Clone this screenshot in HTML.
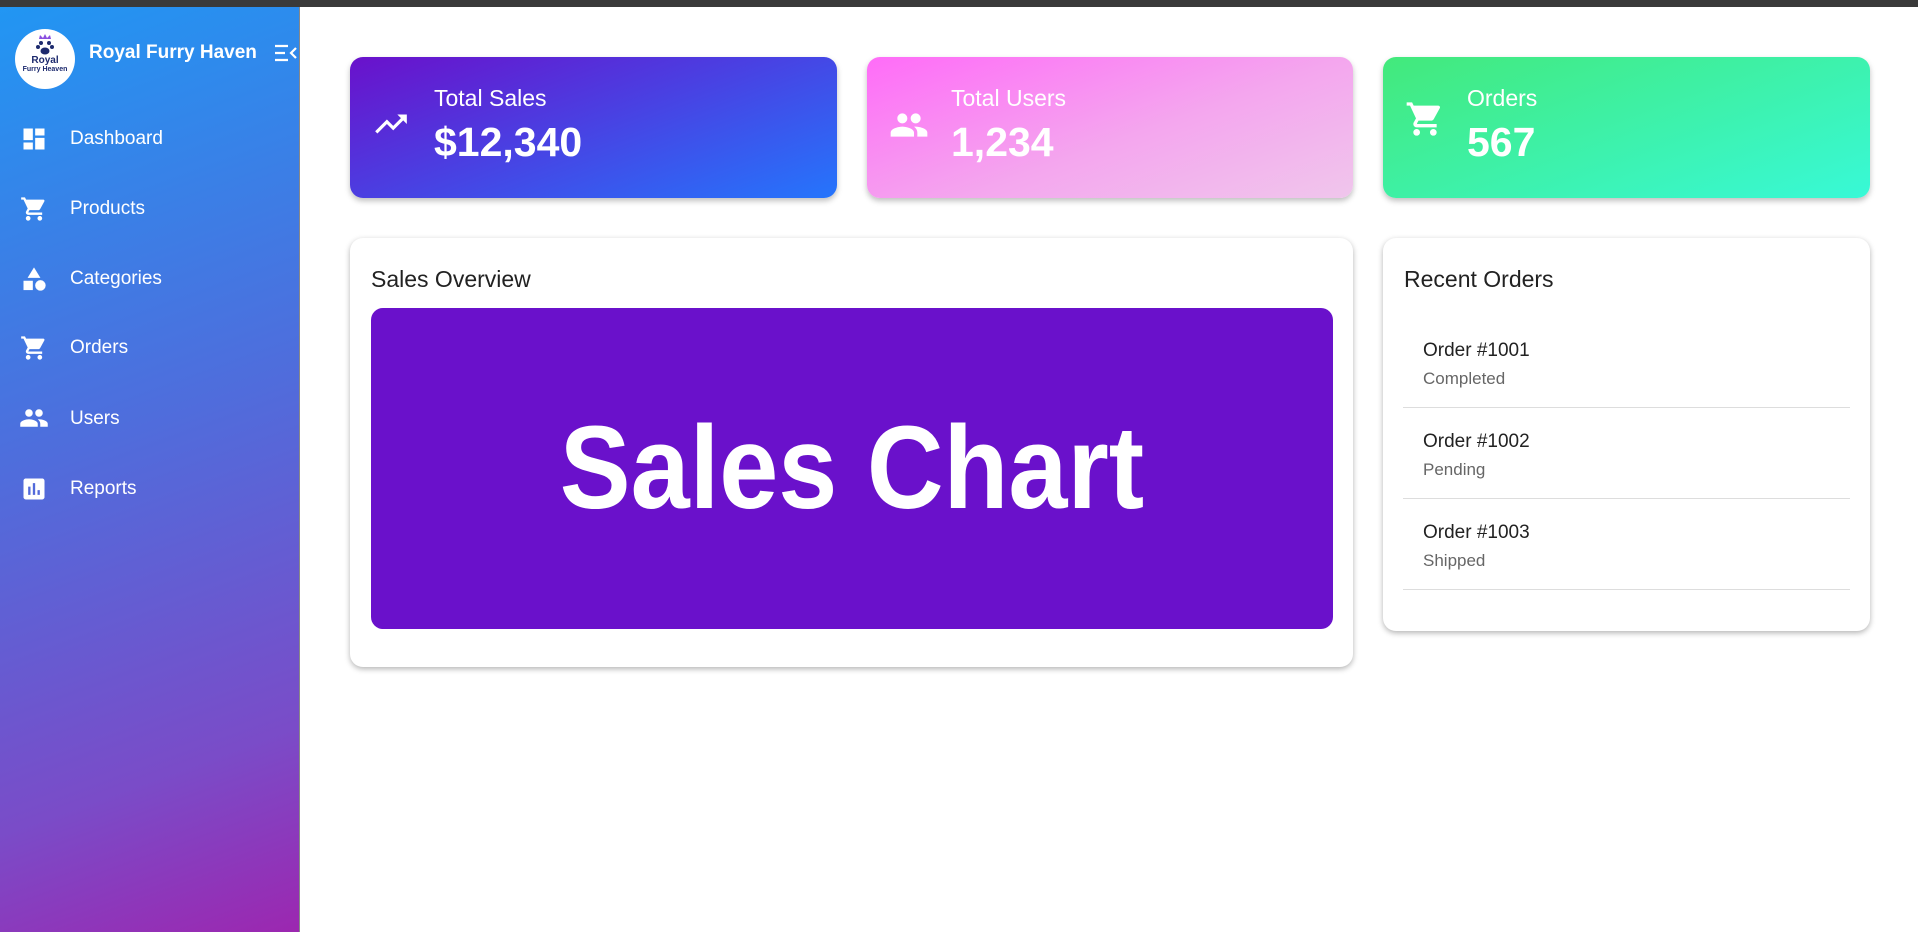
<!DOCTYPE html>
<html><head><meta charset="utf-8"><style>
*{box-sizing:border-box;margin:0;padding:0}
body{width:1918px;height:932px;overflow:hidden;background:#fff;font-family:"Liberation Sans",sans-serif;position:relative}
.topbar{position:absolute;left:0;top:0;width:1918px;height:7px;background:#3a3a3a}
.side{position:absolute;left:0;top:7px;width:300px;height:925px;background:linear-gradient(160deg,#2196f3 0%,#4f6ddc 45%,#7a4cc8 80%,#9c27b0 100%);border-right:1px solid #888}
.logo{position:absolute;left:15px;top:22px;width:60px;height:60px;border-radius:50%;background:#fff;text-align:center;color:#1d2a6e;font-weight:bold}
.brand{position:absolute;left:89px;top:35px;color:#fff;font-weight:bold;font-size:19px}
.item{position:absolute;left:0;width:300px;height:40px;color:#fff;font-size:19px}
.item svg{position:absolute;left:20px;top:6px}
.item span{position:absolute;left:70px;top:9px}
.card{position:absolute;border-radius:13px;box-shadow:0 3px 6px rgba(0,0,0,.25);color:#fff}
.card .t{position:absolute;left:84px;top:28px;font-size:23px}
.card .v{position:absolute;left:84px;top:62px;font-size:41px;font-weight:bold}
.card svg{position:absolute;left:22px;top:48px}
.panel{position:absolute;background:#fff;border-radius:13px;box-shadow:0 2px 6px rgba(0,0,0,.3);color:#222}
.ptitle{position:absolute;left:21px;top:28px;font-size:23px}
.ord{position:absolute;left:20px;width:447px;height:91px;border-bottom:1px solid #ddd}
.ord .a{position:absolute;left:20px;top:23px;font-size:19px;color:#222}
.ord .b{position:absolute;left:20px;top:52px;font-size:17px;color:#666}
</style></head><body>
<div class="topbar"></div>
<div class="side">
 <div class="logo"><svg width="24" height="22" viewBox="0 0 24 22" style="position:absolute;left:18px;top:5px"><path d="M6 5 L7 1 L10 4 L12 0 L14 4 L17 1 L18 5 Z" fill="#8a4fe0"/><circle cx="8" cy="9" r="2" fill="#1d2a6e"/><circle cx="16" cy="9" r="2" fill="#1d2a6e"/><circle cx="5" cy="13" r="2" fill="#1d2a6e"/><circle cx="19" cy="13" r="2" fill="#1d2a6e"/><ellipse cx="12" cy="17" rx="4.5" ry="3.5" fill="#1d2a6e"/></svg><div style="position:absolute;top:26px;width:60px;font-size:10px">Royal</div><div style="position:absolute;top:37px;width:60px;font-size:7px">Furry Heaven</div></div>
 <div class="brand">Royal Furry Haven</div>
 <svg style="position:absolute;left:274px;top:36px" width="24" height="20" viewBox="0 0 24 20"><path d="M1 3h13M1 10h10M1 17h13M22 5l-5 5 5 5" stroke="#fff" stroke-width="2.2" fill="none"/></svg>
 <div class="item" style="top:112px"><svg width="28" height="28" viewBox="0 0 24 24"><path d="M3 13h8V3H3v10zm0 8h8v-6H3v6zm10 0h8V11h-8v10zm0-18v6h8V3h-8z" fill="#fff"/></svg><span>Dashboard</span></div>
 <div class="item" style="top:182px"><svg width="28" height="28" viewBox="0 0 24 24"><path d="M7 18c-1.1 0-2 .9-2 2s.9 2 2 2 2-.9 2-2-.9-2-2-2zM1 2v2h2l3.6 7.59-1.35 2.45c-.16.28-.25.61-.25.96 0 1.1.9 2 2 2h12v-2H7.42c-.14 0-.25-.11-.25-.25l.03-.12.9-1.63h7.45c.75 0 1.41-.41 1.75-1.03l3.58-6.49A1 1 0 0 0 20 4H5.21l-.94-2H1zm16 16c-1.1 0-2 .9-2 2s.9 2 2 2 2-.9 2-2-.9-2-2-2z" fill="#fff"/></svg><span>Products</span></div>
 <div class="item" style="top:252px"><svg width="28" height="28" viewBox="0 0 24 24"><path d="M12 2l-5.5 9h11z" fill="#fff"/><circle cx="17.5" cy="17.5" r="4.5" fill="#fff"/><path d="M3 13.5h8v8H3z" fill="#fff"/></svg><span>Categories</span></div>
 <div class="item" style="top:321px"><svg width="28" height="28" viewBox="0 0 24 24"><path d="M7 18c-1.1 0-2 .9-2 2s.9 2 2 2 2-.9 2-2-.9-2-2-2zM1 2v2h2l3.6 7.59-1.35 2.45c-.16.28-.25.61-.25.96 0 1.1.9 2 2 2h12v-2H7.42c-.14 0-.25-.11-.25-.25l.03-.12.9-1.63h7.45c.75 0 1.41-.41 1.75-1.03l3.58-6.49A1 1 0 0 0 20 4H5.21l-.94-2H1zm16 16c-1.1 0-2 .9-2 2s.9 2 2 2 2-.9 2-2-.9-2-2-2z" fill="#fff"/></svg><span>Orders</span></div>
 <div class="item" style="top:392px"><svg width="30" height="30" viewBox="0 0 24 24" style="left:19px;top:4px"><path d="M16 11c1.66 0 2.99-1.34 2.99-3S17.66 5 16 5c-1.66 0-3 1.34-3 3s1.34 3 3 3zm-8 0c1.66 0 2.99-1.34 2.99-3S9.66 5 8 5C6.34 5 5 6.34 5 8s1.34 3 3 3zm0 2c-2.33 0-7 1.17-7 3.5V19h14v-2.5c0-2.33-4.67-3.5-7-3.5zm8 0c-.29 0-.62.02-.97.05 1.16.84 1.97 1.97 1.97 3.45V19h6v-2.5c0-2.33-4.67-3.5-7-3.5z" fill="#fff"/></svg><span>Users</span></div>
 <div class="item" style="top:462px"><svg width="28" height="28" viewBox="0 0 24 24"><path d="M19 3H5c-1.1 0-2 .9-2 2v14c0 1.1.9 2 2 2h14c1.1 0 2-.9 2-2V5c0-1.1-.9-2-2-2zM9 17H7v-7h2v7zm4 0h-2V7h2v10zm4 0h-2v-4h2v4z" fill="#fff"/></svg><span>Reports</span></div>
</div>

<div class="card" style="left:350px;top:57px;width:487px;height:141px;background:linear-gradient(160deg,#6a11cb,#2575fc)">
 <svg width="38" height="38" viewBox="0 0 24 24"><path d="M16 6l2.29 2.29-4.88 4.88-4-4L2 16.59 3.41 18l6-6 4 4 6.3-6.29L22 12V6z" fill="#fff"/></svg>
 <div class="t">Total Sales</div><div class="v">$12,340</div></div>
<div class="card" style="left:867px;top:57px;width:486px;height:141px;background:linear-gradient(160deg,#ff6cf8,#f4a6ee 55%,#f0c6ec)">
 <svg width="40" height="40" viewBox="0 0 24 24"><path d="M16 11c1.66 0 2.99-1.34 2.99-3S17.66 5 16 5c-1.66 0-3 1.34-3 3s1.34 3 3 3zm-8 0c1.66 0 2.99-1.34 2.99-3S9.66 5 8 5C6.34 5 5 6.34 5 8s1.34 3 3 3zm0 2c-2.33 0-7 1.17-7 3.5V19h14v-2.5c0-2.33-4.67-3.5-7-3.5zm8 0c-.29 0-.62.02-.97.05 1.16.84 1.970 1.97 1.97 3.45V19h6v-2.5c0-2.33-4.67-3.5-7-3.5z" fill="#fff"/></svg>
 <div class="t">Total Users</div><div class="v">1,234</div></div>
<div class="card" style="left:1383px;top:57px;width:487px;height:141px;background:linear-gradient(160deg,#43e97b,#38f9d7)">
 <svg width="40" height="40" viewBox="0 0 24 24" style="top:42px"><path d="M7 18c-1.1 0-2 .9-2 2s.9 2 2 2 2-.9 2-2-.9-2-2-2zM1 2v2h2l3.6 7.59-1.35 2.45c-.16.28-.25.61-.25.96 0 1.1.9 2 2 2h12v-2H7.42c-.14 0-.25-.11-.25-.25l.03-.12.9-1.63h7.45c.75 0 1.41-.41 1.75-1.03l3.58-6.49A1 1 0 0 0 20 4H5.21l-.94-2H1zm16 16c-1.1 0-2 .9-2 2s.9 2 2 2 2-.9 2-2-.9-2-2-2z" fill="#fff"/></svg>
 <div class="t">Orders</div><div class="v">567</div></div>

<div class="panel" style="left:350px;top:238px;width:1003px;height:429px">
 <div class="ptitle">Sales Overview</div>
 <div style="position:absolute;left:21px;top:70px;width:962px;height:321px;background:#6a11cb;border-radius:12px;overflow:hidden">
  <div style="position:absolute;left:0;top:0;width:962px;height:321px;color:#fff;font-size:118px;text-align:center;line-height:321px;font-weight:bold;transform:scaleX(0.9)">Sales Chart</div>
 </div>
</div>
<div class="panel" style="left:1383px;top:238px;width:487px;height:393px">
 <div class="ptitle">Recent Orders</div>
 <div class="ord" style="top:79px"><div class="a">Order #1001</div><div class="b">Completed</div></div>
 <div class="ord" style="top:170px"><div class="a">Order #1002</div><div class="b">Pending</div></div>
 <div class="ord" style="top:261px"><div class="a">Order #1003</div><div class="b">Shipped</div></div>
</div>
</body></html>
